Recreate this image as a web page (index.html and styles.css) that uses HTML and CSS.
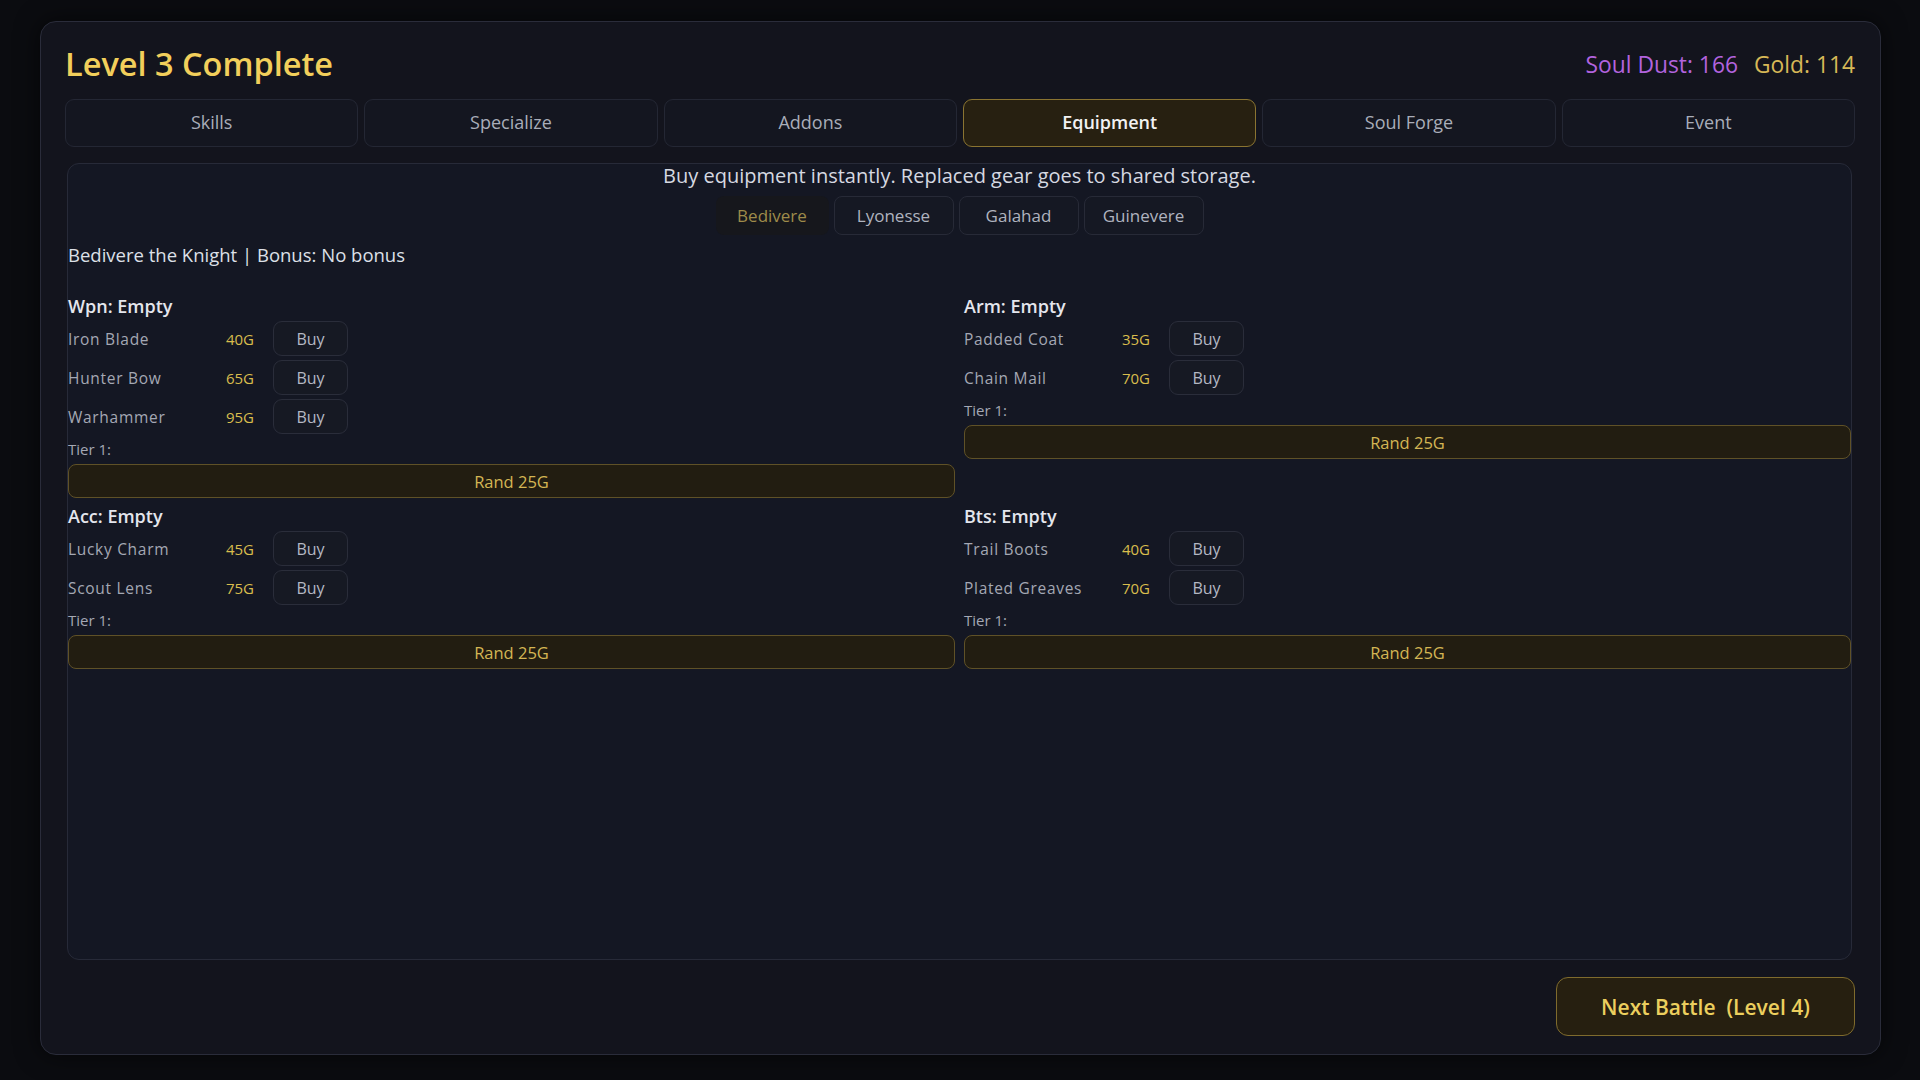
FILE: index.html
```html
<!DOCTYPE html>
<html>
<head>
<meta charset="utf-8">
<link rel="stylesheet" href="styles.css">
</head>
<body>
<div class="panel">
  <div class="header">
    <h1 class="title">Level 3 Complete</h1>
    <div class="currency"><span class="dust">Soul Dust: 166</span><span class="gold">Gold: 114</span></div>
  </div>
  <div class="tabs">
    <div class="tab">Skills</div>
    <div class="tab">Specialize</div>
    <div class="tab">Addons</div>
    <div class="tab active">Equipment</div>
    <div class="tab">Soul Forge</div>
    <div class="tab">Event</div>
  </div>
  <div class="content">
    <div class="desc">Buy equipment instantly. Replaced gear goes to shared storage.</div>
    <div class="chars">
      <div class="char active">Bedivere</div>
      <div class="char">Lyonesse</div>
      <div class="char">Galahad</div>
      <div class="char">Guinevere</div>
    </div>
    <div class="hero">Bedivere the Knight | Bonus: No bonus</div>
    <div class="slots">
      <div class="slot">
        <div class="slot-head">Wpn: Empty</div>
        <div class="item"><span class="name">Iron Blade</span><span class="price">40G</span><button class="buy">Buy</button></div>
        <div class="item"><span class="name">Hunter Bow</span><span class="price">65G</span><button class="buy">Buy</button></div>
        <div class="item"><span class="name">Warhammer</span><span class="price">95G</span><button class="buy">Buy</button></div>
        <div class="tier">Tier 1:</div>
        <button class="rand">Rand 25G</button>
      </div>
      <div class="slot">
        <div class="slot-head">Arm: Empty</div>
        <div class="item"><span class="name">Padded Coat</span><span class="price">35G</span><button class="buy">Buy</button></div>
        <div class="item"><span class="name">Chain Mail</span><span class="price">70G</span><button class="buy">Buy</button></div>
        <div class="tier">Tier 1:</div>
        <button class="rand">Rand 25G</button>
      </div>
      <div class="slot">
        <div class="slot-head">Acc: Empty</div>
        <div class="item"><span class="name">Lucky Charm</span><span class="price">45G</span><button class="buy">Buy</button></div>
        <div class="item"><span class="name">Scout Lens</span><span class="price">75G</span><button class="buy">Buy</button></div>
        <div class="tier">Tier 1:</div>
        <button class="rand">Rand 25G</button>
      </div>
      <div class="slot">
        <div class="slot-head">Bts: Empty</div>
        <div class="item"><span class="name">Trail Boots</span><span class="price">40G</span><button class="buy">Buy</button></div>
        <div class="item"><span class="name">Plated Greaves</span><span class="price">70G</span><button class="buy">Buy</button></div>
        <div class="tier">Tier 1:</div>
        <button class="rand">Rand 25G</button>
      </div>
    </div>
  </div>
  <div class="footer">
    <button class="next">Next Battle&nbsp; (Level 4)</button>
  </div>
</div>
</body>
</html>
```
FILE: styles.css
```css
* { box-sizing: border-box; }
html, body { margin: 0; }
body {
  width: 1920px;
  height: 1080px;
  padding: 21px 39px 25px 40px;
  background: #0b0c10;
  font-family: "Open Sans", "Noto Sans", sans-serif;
  display: flex;
}
.panel {
  flex: 1;
  display: flex;
  flex-direction: column;
  background: #13141d;
  border: 1px solid #2a2c3a;
  border-radius: 16px;
  padding: 22px 25px 18px 24px;
  box-shadow: 0 0 24px rgba(0,0,0,0.6);
}
.header {
  display: flex;
  justify-content: space-between;
  align-items: center;
  height: 40px;
}
.title {
  margin: 0;
  font-size: 32.5px;
  font-weight: 600;
  color: #f2cf5b;
  line-height: 40px;
}
.currency {
  font-size: 22.8px;
  font-weight: 400;
  display: flex;
  gap: 16px;
}
.dust { color: #b263de; }
.gold { color: #d7b857; }
.tabs {
  margin-top: 15px;
  display: grid;
  grid-template-columns: repeat(6, 1fr);
  gap: 6px;
}
.tab {
  height: 48px;
  display: flex;
  align-items: center;
  justify-content: center;
  padding-bottom: 3px;
  border: 1px solid #242734;
  border-radius: 9px;
  background: #141620;
  color: #a9adb9;
  font-size: 18px;
}
.tab.active {
  background: #272011;
  border-color: #8a7431;
  color: #f2f2f2;
  font-weight: 600;
}
.content {
  flex: 1;
  margin: 16px 3px 0 2px;
  border: 1px solid #272a38;
  border-radius: 12px;
  background: #141723;
  display: flex;
  flex-direction: column;
}
.desc {
  text-align: center;
  font-size: 20px;
  line-height: 24px;
  color: #d6d9e1;
}
.chars {
  margin-top: 8px;
  display: flex;
  justify-content: center;
  gap: 5px;
}
.char {
  width: 120px;
  height: 39px;
  display: flex;
  align-items: center;
  justify-content: center;
  border: 1px solid #272a37;
  border-radius: 8px;
  background: #151823;
  color: #afb3bf;
  font-size: 17px;
}
.char.active {
  width: 113px;
  border-color: transparent;
  background: #16171c;
  color: #9e8b4a;
}
.hero {
  margin-top: 8px;
  font-size: 18.5px;
  line-height: 24px;
  color: #dde0e8;
}
.slots {
  margin-top: 28px;
  display: grid;
  grid-template-columns: 1fr 1fr;
  column-gap: 9px;
  row-gap: 7px;
  align-items: start;
}
.slot {
  display: flex;
  flex-direction: column;
  gap: 4px;
}
.slot-head {
  font-size: 18px;
  font-weight: 600;
  line-height: 22px;
  color: #e4e6ed;
}
.item {
  display: flex;
  align-items: center;
  height: 35px;
}
.name {
  width: 150px;
  font-size: 15.5px;
  letter-spacing: 0.7px;
  color: #a4a8b4;
}
.price {
  width: 36px;
  text-align: right;
  font-size: 15px;
  color: #d9bd4d;
}
.buy {
  margin-left: 19px;
  width: 75px;
  height: 35px;
  border: 1px solid #2a2d3a;
  border-radius: 9px;
  background: #161923;
  color: #b4b8c4;
  font-family: inherit;
  font-size: 16px;
  padding: 0;
}
.tier {
  font-size: 15px;
  line-height: 22px;
  color: #a4a8b4;
}
.rand {
  height: 34px;
  width: 100%;
  border: 1px solid #5f5127;
  border-radius: 8px;
  background: #221d11;
  color: #d4b654;
  font-family: inherit;
  font-size: 16.5px;
  padding: 0;
}
.footer {
  margin-top: 17px;
  display: flex;
  justify-content: flex-end;
}
.next {
  width: 299px;
  height: 59px;
  border: 1px solid #7f6b2d;
  border-radius: 12px;
  background: #261f10;
  color: #eccf5e;
  font-family: inherit;
  font-size: 21px;
  font-weight: 600;
  padding: 0;
}
```
